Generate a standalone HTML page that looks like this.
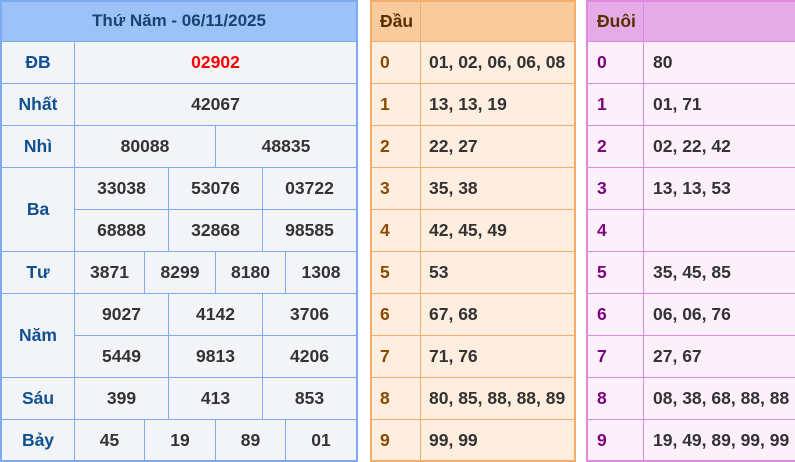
<!DOCTYPE html><html><head><meta charset="utf-8"><style>
body{margin:0;width:795px;height:462px;background:#fff;overflow:hidden;font-family:"Liberation Sans",Arial,sans-serif;font-weight:bold;font-size:17.5px;position:relative}
.c{position:absolute;box-sizing:border-box;border:1px solid #7eaaf0;display:flex;align-items:center;justify-content:center;background:#f3f4f8;color:#333}
.l{color:#0f5190}
.h{background:#9cc2f8;color:#17456f;font-size:17px}
.o{border-color:#f5ae6a;background:#fdeee0;justify-content:flex-start;padding-left:8px;color:#333}
.o.n{color:#8b4a00}
.o.hd{background:#f9cb9c;color:#5a2e00}
.p{border-color:#df8ae0;background:#fcf0fa;justify-content:flex-start;padding-left:9px;color:#333}
.p.n{color:#7d007d}
.p.hd{background:#e4abe7;color:#5a2e00}
.red{color:#f00}
.f{position:absolute;box-sizing:border-box;pointer-events:none;z-index:5}
</style></head><body>
<div class="c h" style="left:1px;top:0;width:356px;height:42px">Thứ Năm - 06/11/2025</div>

<div class="c l" style="left:1px;top:41px;width:74px;height:43px">ĐB</div>
<div class="c red" style="left:74px;top:41px;width:283px;height:43px">02902</div>

<div class="c l" style="left:1px;top:83px;width:74px;height:43px">Nhất</div>
<div class="c" style="left:74px;top:83px;width:283px;height:43px">42067</div>

<div class="c l" style="left:1px;top:125px;width:74px;height:43px">Nhì</div>
<div class="c" style="left:74px;top:125px;width:142px;height:43px">80088</div>
<div class="c" style="left:215px;top:125px;width:142px;height:43px">48835</div>

<div class="c l" style="left:1px;top:167px;width:74px;height:85px">Ba</div>
<div class="c" style="left:74px;top:167px;width:95px;height:43px">33038</div>
<div class="c" style="left:168px;top:167px;width:95px;height:43px">53076</div>
<div class="c" style="left:262px;top:167px;width:95px;height:43px">03722</div>
<div class="c" style="left:74px;top:209px;width:95px;height:43px">68888</div>
<div class="c" style="left:168px;top:209px;width:95px;height:43px">32868</div>
<div class="c" style="left:262px;top:209px;width:95px;height:43px">98585</div>

<div class="c l" style="left:1px;top:251px;width:74px;height:43px">Tư</div>
<div class="c" style="left:74px;top:251px;width:71px;height:43px">3871</div>
<div class="c" style="left:144px;top:251px;width:72px;height:43px">8299</div>
<div class="c" style="left:215px;top:251px;width:71px;height:43px">8180</div>
<div class="c" style="left:285px;top:251px;width:72px;height:43px">1308</div>

<div class="c l" style="left:1px;top:293px;width:74px;height:85px">Năm</div>
<div class="c" style="left:74px;top:293px;width:95px;height:43px">9027</div>
<div class="c" style="left:168px;top:293px;width:95px;height:43px">4142</div>
<div class="c" style="left:262px;top:293px;width:95px;height:43px">3706</div>
<div class="c" style="left:74px;top:335px;width:95px;height:43px">5449</div>
<div class="c" style="left:168px;top:335px;width:95px;height:43px">9813</div>
<div class="c" style="left:262px;top:335px;width:95px;height:43px">4206</div>

<div class="c l" style="left:1px;top:377px;width:74px;height:43px">Sáu</div>
<div class="c" style="left:74px;top:377px;width:95px;height:43px">399</div>
<div class="c" style="left:168px;top:377px;width:95px;height:43px">413</div>
<div class="c" style="left:262px;top:377px;width:95px;height:43px">853</div>

<div class="c l" style="left:1px;top:419px;width:74px;height:43px">Bảy</div>
<div class="c" style="left:74px;top:419px;width:71px;height:43px">45</div>
<div class="c" style="left:144px;top:419px;width:72px;height:43px">19</div>
<div class="c" style="left:215px;top:419px;width:71px;height:43px">89</div>
<div class="c" style="left:285px;top:419px;width:72px;height:43px">01</div>
<div class="f" style="left:0;top:0;width:358px;height:462px;border:2px solid #7eaaf0"></div>

<!-- Dau -->
<div class="c o hd" style="left:371px;top:0;width:50px;height:42px">Đầu</div>
<div class="c o hd" style="left:420px;top:0;width:155px;height:42px"></div>
<div class="c o n" style="left:371px;top:41px;width:50px;height:43px">0</div><div class="c o" style="left:420px;top:41px;width:155px;height:43px">01, 02, 06, 06, 08</div>
<div class="c o n" style="left:371px;top:83px;width:50px;height:43px">1</div><div class="c o" style="left:420px;top:83px;width:155px;height:43px">13, 13, 19</div>
<div class="c o n" style="left:371px;top:125px;width:50px;height:43px">2</div><div class="c o" style="left:420px;top:125px;width:155px;height:43px">22, 27</div>
<div class="c o n" style="left:371px;top:167px;width:50px;height:43px">3</div><div class="c o" style="left:420px;top:167px;width:155px;height:43px">35, 38</div>
<div class="c o n" style="left:371px;top:209px;width:50px;height:43px">4</div><div class="c o" style="left:420px;top:209px;width:155px;height:43px">42, 45, 49</div>
<div class="c o n" style="left:371px;top:251px;width:50px;height:43px">5</div><div class="c o" style="left:420px;top:251px;width:155px;height:43px">53</div>
<div class="c o n" style="left:371px;top:293px;width:50px;height:43px">6</div><div class="c o" style="left:420px;top:293px;width:155px;height:43px">67, 68</div>
<div class="c o n" style="left:371px;top:335px;width:50px;height:43px">7</div><div class="c o" style="left:420px;top:335px;width:155px;height:43px">71, 76</div>
<div class="c o n" style="left:371px;top:377px;width:50px;height:43px">8</div><div class="c o" style="left:420px;top:377px;width:155px;height:43px">80, 85, 88, 88, 89</div>
<div class="c o n" style="left:371px;top:419px;width:50px;height:43px">9</div><div class="c o" style="left:420px;top:419px;width:155px;height:43px">99, 99</div>
<div class="f" style="left:370px;top:0;width:206px;height:462px;border:2px solid #f5ae6a"></div>

<!-- Duoi -->
<div class="c p hd" style="left:587px;top:0;width:57px;height:42px">Đuôi</div>
<div class="c p hd" style="left:643px;top:0;width:160px;height:42px"></div>
<div class="c p n" style="left:587px;top:41px;width:57px;height:43px">0</div><div class="c p" style="left:643px;top:41px;width:160px;height:43px">80</div>
<div class="c p n" style="left:587px;top:83px;width:57px;height:43px">1</div><div class="c p" style="left:643px;top:83px;width:160px;height:43px">01, 71</div>
<div class="c p n" style="left:587px;top:125px;width:57px;height:43px">2</div><div class="c p" style="left:643px;top:125px;width:160px;height:43px">02, 22, 42</div>
<div class="c p n" style="left:587px;top:167px;width:57px;height:43px">3</div><div class="c p" style="left:643px;top:167px;width:160px;height:43px">13, 13, 53</div>
<div class="c p n" style="left:587px;top:209px;width:57px;height:43px">4</div><div class="c p" style="left:643px;top:209px;width:160px;height:43px"></div>
<div class="c p n" style="left:587px;top:251px;width:57px;height:43px">5</div><div class="c p" style="left:643px;top:251px;width:160px;height:43px">35, 45, 85</div>
<div class="c p n" style="left:587px;top:293px;width:57px;height:43px">6</div><div class="c p" style="left:643px;top:293px;width:160px;height:43px">06, 06, 76</div>
<div class="c p n" style="left:587px;top:335px;width:57px;height:43px">7</div><div class="c p" style="left:643px;top:335px;width:160px;height:43px">27, 67</div>
<div class="c p n" style="left:587px;top:377px;width:57px;height:43px">8</div><div class="c p" style="left:643px;top:377px;width:160px;height:43px">08, 38, 68, 88, 88</div>
<div class="c p n" style="left:587px;top:419px;width:57px;height:43px">9</div><div class="c p" style="left:643px;top:419px;width:160px;height:43px">19, 49, 89, 99, 99</div>
<div class="f" style="left:586px;top:0;width:220px;height:462px;border:2px solid #df8ae0"></div>
</body></html>
